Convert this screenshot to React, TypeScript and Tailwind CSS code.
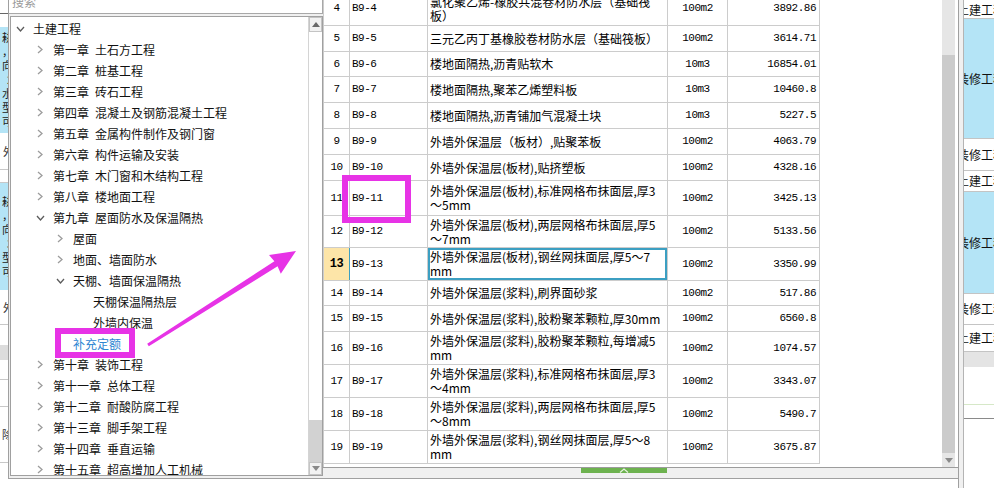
import React from 'react'

type TreeNode = { label: string; pad: string; arrow?: 'right' | 'down'; blue?: boolean }

const L1 = 'pl-[24px]'
const L2 = 'pl-[44px]'

const TREE: TreeNode[] = [
  { label: '土建工程', pad: 'pl-[4px]', arrow: 'down' },
  { label: '第一章 土石方工程', pad: L1, arrow: 'right' },
  { label: '第二章 桩基工程', pad: L1, arrow: 'right' },
  { label: '第三章 砖石工程', pad: L1, arrow: 'right' },
  { label: '第四章 混凝土及钢筋混凝土工程', pad: L1, arrow: 'right' },
  { label: '第五章 金属构件制作及钢门窗', pad: L1, arrow: 'right' },
  { label: '第六章 构件运输及安装', pad: L1, arrow: 'right' },
  { label: '第七章 木门窗和木结构工程', pad: L1, arrow: 'right' },
  { label: '第八章 楼地面工程', pad: L1, arrow: 'right' },
  { label: '第九章 屋面防水及保温隔热', pad: L1, arrow: 'down' },
  { label: '屋面', pad: L2, arrow: 'right' },
  { label: '地面、墙面防水', pad: L2, arrow: 'right' },
  { label: '天棚、墙面保温隔热', pad: L2, arrow: 'down' },
  { label: '天棚保温隔热层', pad: 'pl-[82px]' },
  { label: '外墙内保温', pad: 'pl-[82px]' },
  { label: '补充定额', pad: 'pl-[62px]', blue: true },
  { label: '第十章 装饰工程', pad: L1, arrow: 'right' },
  { label: '第十一章 总体工程', pad: L1, arrow: 'right' },
  { label: '第十二章 耐酸防腐工程', pad: L1, arrow: 'right' },
  { label: '第十三章 脚手架工程', pad: L1, arrow: 'right' },
  { label: '第十四章 垂直运输', pad: L1, arrow: 'right' },
  { label: '第十五章 超高增加人工机械', pad: L1, arrow: 'right' },
]

type Row = { n: number; code: string; name: string[]; unit: string; price: string; h: string }

const ROWS: Row[] = [
  { n: 4, code: 'B9-4', name: ['氯化聚乙烯-橡胶共混卷材防水层（基础筏', '板）'], unit: '100m2', price: '3892.86', h: 'h-[34px]' },
  { n: 5, code: 'B9-5', name: ['三元乙丙丁基橡胶卷材防水层（基础筏板）'], unit: '100m2', price: '3614.71', h: 'h-[26px]' },
  { n: 6, code: 'B9-6', name: ['楼地面隔热,沥青贴软木'], unit: '10m3', price: '16854.01', h: 'h-[25px]' },
  { n: 7, code: 'B9-7', name: ['楼地面隔热,聚苯乙烯塑料板'], unit: '10m3', price: '10460.8', h: 'h-[26px]' },
  { n: 8, code: 'B9-8', name: ['楼地面隔热,沥青铺加气混凝土块'], unit: '10m3', price: '5227.5', h: 'h-[26px]' },
  { n: 9, code: 'B9-9', name: ['外墙外保温层（板材）,贴聚苯板'], unit: '100m2', price: '4063.79', h: 'h-[26px]' },
  { n: 10, code: 'B9-10', name: ['外墙外保温层(板材),贴挤塑板'], unit: '100m2', price: '4328.16', h: 'h-[26px]' },
  { n: 11, code: 'B9-11', name: ['外墙外保温层(板材),标准网格布抹面层,厚3', '～5mm'], unit: '100m2', price: '3425.13', h: 'h-[35px]' },
  { n: 12, code: 'B9-12', name: ['外墙外保温层(板材),两层网格布抹面层,厚5', '～7mm'], unit: '100m2', price: '5133.56', h: 'h-[32px]' },
  { n: 13, code: 'B9-13', name: ['外墙外保温层(板材),钢丝网抹面层,厚5～7', 'mm'], unit: '100m2', price: '3350.99', h: 'h-[33px]' },
  { n: 14, code: 'B9-14', name: ['外墙外保温层(浆料),刷界面砂浆'], unit: '100m2', price: '517.86', h: 'h-[25px]' },
  { n: 15, code: 'B9-15', name: ['外墙外保温层(浆料),胶粉聚苯颗粒,厚30mm'], unit: '100m2', price: '6560.8', h: 'h-[26px]' },
  { n: 16, code: 'B9-16', name: ['外墙外保温层(浆料),胶粉聚苯颗粒,每增减5', 'mm'], unit: '100m2', price: '1074.57', h: 'h-[33px]' },
  { n: 17, code: 'B9-17', name: ['外墙外保温层(浆料),标准网格布抹面层,厚3', '～4mm'], unit: '100m2', price: '3343.07', h: 'h-[33px]' },
  { n: 18, code: 'B9-18', name: ['外墙外保温层(浆料),两层网格布抹面层,厚5', '～8mm'], unit: '100m2', price: '5490.7', h: 'h-[33px]' },
  { n: 19, code: 'B9-19', name: ['外墙外保温层(浆料),钢丝网抹面层,厚5～8', 'mm'], unit: '100m2', price: '3675.87', h: 'h-[33px]' },
]

const MONO = "font-['Liberation_Mono','Noto_Sans_CJK_SC',monospace] text-[11px] tracking-[-0.5px]"

function Chevron({ dir }: { dir: 'right' | 'down' }) {
  if (dir === 'right')
    return (
      <svg width="6" height="9" viewBox="0 0 6 9">
        <path d="M1 1l4 3.5L1 8" fill="none" stroke="#9c9c9c" strokeWidth="1.3" />
      </svg>
    )
  return (
    <svg width="9" height="6" viewBox="0 0 9 6">
      <path d="M1 1l3.5 4L8 1" fill="none" stroke="#5c5c5c" strokeWidth="1.3" />
    </svg>
  )
}

function TreeLabel({ text }: { text: string }) {
  const parts = text.split(' ')
  if (parts.length === 1) return <span>{text}</span>
  return (
    <span className="flex gap-[6px]">
      <span>{parts[0]}</span>
      <span>{parts[1]}</span>
    </span>
  )
}

// a sliver of the sheet behind the dialog, left side
function LeftStrip() {
  return (
    <div className="flex h-[488px] w-[8px] shrink-0 flex-col overflow-hidden bg-white text-[11px] leading-[13px]">
      <div className="h-[14px] border-b border-[#666]" />
      <div className="h-[13px]" />
      <div className="flex h-[106px] flex-col items-end justify-center overflow-hidden bg-[#b4e4f6] text-[#222]">
        {['耕', '，', '向', '2', '水', '型', '可'].map((c, i) => (
          <span key={i} className="-mr-[5px] h-[14px]">{c}</span>
        ))}
      </div>
      <div className="flex h-[37px] items-center justify-end border-b border-[#c8c8c8]">
        <span className="-mr-[6px] text-[#333]">外</span>
      </div>
      <div className="h-[13px] border-b border-[#c8c8c8]" />
      <div className="flex h-[107px] flex-col items-end justify-center overflow-hidden bg-[#b4e4f6] text-[#222]">
        {['耕', '，', '向', '3', '型', '可'].map((c, i) => (
          <span key={i} className="-mr-[5px] h-[14px]">{c}</span>
        ))}
      </div>
      <div className="flex h-[35px] items-center justify-end border-b border-[#c8c8c8]">
        <span className="-mr-[6px] text-[#333]">外</span>
      </div>
      <div className="h-[20px]" />
      <div className="h-[15px] bg-[#dcdcdc]" />
      <div className="h-[20px] border-b border-[#c8c8c8]" />
      <div className="h-[27px] border-b border-[#c8c8c8]" />
      <div className="flex h-[56px] items-center justify-end border-b border-[#c8c8c8]">
        <span className="-mr-[5px] text-[#333]">除</span>
      </div>
    </div>
  )
}

function RightCell({ text, h, blue, last }: { text?: string; h: string; blue?: boolean; last?: string }) {
  return (
    <div
      className={`flex ${h} items-center overflow-hidden border-b ${last ?? 'border-[#c4c4c4]'} ${
        blue ? 'bg-[#b4e4f6]' : 'bg-white'
      }`}
    >
      {text && <span className="-ml-[7px] whitespace-nowrap text-[#111]">{text}</span>}
    </div>
  )
}

// and the right side of it
function RightStrip() {
  return (
    <div className="flex h-[488px] w-[36px] shrink-0 border-l border-[#a0a0a0] bg-[#f0f0f0] pl-[4px]">
      <div className="flex w-[31px] flex-col overflow-hidden border-l border-[#b4b4b4] bg-white">
        <div className="flex h-[19px] items-end overflow-hidden border-b border-[#c4c4c4]">
          <span className="-ml-[7px] whitespace-nowrap leading-[17px] text-[#111]">土建工程</span>
        </div>
        <RightCell text="装修工程" h="h-[120px]" blue />
        <RightCell text="装修工程" h="h-[32px]" />
        <RightCell text="土建工程" h="h-[21px]" />
        <RightCell text="装修工程" h="h-[102px]" blue />
        <RightCell text="装修工程" h="h-[31px]" />
        <RightCell text="土建工程" h="h-[27px]" />
        <div className="h-[15px] bg-[#e4e4e4]" />
        <RightCell h="h-[38px]" last="border-[#d6e8c8]" />
        <RightCell h="h-[14px]" last="border-[#8a8a8a]" />
      </div>
    </div>
  )
}

function TreeScrollbar() {
  return (
    <div className="flex w-[14px] shrink-0 flex-col border-l border-[#d4d4d4] bg-white">
      <div className="flex h-[15px] items-center justify-center border border-[#c4c4c4] bg-[#f2f2f2]">
        <svg width="8" height="5" viewBox="0 0 8 5">
          <path d="M0 5L4 0l4 5z" fill="#6a6a6a" />
        </svg>
      </div>
      <div className="flex-1" />
      <div className="h-[42px] bg-[#d2d2d2]" />
      <div className="flex h-[13px] items-center justify-center border border-[#c4c4c4] bg-[#f2f2f2]">
        <svg width="8" height="5" viewBox="0 0 8 5">
          <path d="M0 0l4 5 4-5z" fill="#8a8a8a" />
        </svg>
      </div>
    </div>
  )
}

function TablePanel() {
  return (
    <div className="flex w-[635px] shrink-0 flex-col">
      <div className="flex h-[467px] bg-white">
        <div className="w-[497px] shrink-0 overflow-hidden border-l border-[#cccccc]">
          <div className="-mt-[8px]">
            {ROWS.map((r) => {
              const sel = r.n === 13
              return (
                <div key={r.n} className={`flex ${r.h} border-b border-[#cccccc]`}>
                  <div
                    className={`flex w-[26px] items-center justify-center border-r ${MONO} ${
                      sel ? 'border-[#3c9fc2] bg-[#fde5a8] font-bold text-[12px]' : 'border-[#cccccc]'
                    }`}
                  >
                    {r.n}
                  </div>
                  <div className={`flex w-[78px] items-center border-r border-[#cccccc] pl-[2px] ${MONO}`}>{r.code}</div>
                  <div
                    className={`flex w-[240px] flex-col justify-center overflow-hidden whitespace-nowrap border-r border-[#cccccc] pl-[2px] leading-[14px] ${
                      sel ? 'shadow-[inset_0_0_0_2px_#3c9fc2]' : ''
                    }`}
                  >
                    {r.name.map((l, i) => (
                      <span key={i}>{l}</span>
                    ))}
                  </div>
                  <div className={`flex w-[60px] items-center justify-center border-r border-[#cccccc] ${MONO}`}>{r.unit}</div>
                  <div className={`flex w-[92px] items-center justify-end border-r border-[#cccccc] pr-[3px] ${MONO}`}>
                    {r.price}
                  </div>
                </div>
              )
            })}
          </div>
        </div>
        <div className="flex-1 bg-white" />
        <div className="flex w-[13px] shrink-0 flex-col">
          <div className="h-[55px] bg-[#e6e6e6]" />
          <div className="flex-1 bg-[#cbcbcb]" />
          <div className="flex h-[14px] items-center justify-center bg-[#e6e6e6]">
            <svg width="8" height="5" viewBox="0 0 8 5">
              <path d="M0 0l4 5 4-5z" fill="#8a8a8a" />
            </svg>
          </div>
        </div>
        <div className="w-[3px] bg-white" />
      </div>
      <div className="h-[11px] border-t border-[#9c9c9c] bg-[#f0f0f0]">
        <div className="ml-[258px] flex h-[5px] w-[86px] items-center justify-center bg-[#6db24f]">
          <svg width="10" height="5" viewBox="0 0 10 5">
            <path d="M1 4.5L5 1l4 3.5" fill="none" stroke="#e8f4e0" strokeWidth="1.2" />
          </svg>
        </div>
      </div>
    </div>
  )
}

export default function App() {
  return (
    <div className="relative flex h-[488px] w-[994px] overflow-hidden bg-white font-['Noto_Sans_CJK_SC',sans-serif] text-[12px] text-black">
      <LeftStrip />
      <div className="flex h-[488px] w-[950px] shrink-0 flex-col">
        <div className="flex h-[479px] border-b border-l border-[#a0a0a0] bg-[#f0f0f0]">
          {/* tree side */}
          <div className="flex w-[314px] shrink-0 flex-col">
            <div className="-mt-[10px] h-[24px] border-b border-r border-[#a8a8a8] bg-white pl-[3px] leading-[23px] text-[#9a9a9a]">
              搜索
            </div>
            <div className="ml-[1px] mt-[2px] flex h-[460px] w-[313px] overflow-hidden border border-[#a0a0a0] bg-white">
              <div className="flex-1 overflow-hidden pt-[1px]">
                {TREE.map((t, i) => (
                  <div key={i} className={`flex h-[21px] items-center whitespace-nowrap ${t.pad}`}>
                    {t.arrow && (
                      <span className="mr-[8px] flex w-[10px] justify-center">
                        <Chevron dir={t.arrow} />
                      </span>
                    )}
                    <span className={t.blue ? 'text-[#2f86d2]' : 'text-[#111]'}>
                      <TreeLabel text={t.label} />
                    </span>
                  </div>
                ))}
              </div>
              <TreeScrollbar />
            </div>
          </div>
          <TablePanel />
        </div>
        <div className="flex-1 bg-white" />
      </div>
      <RightStrip />

      {/* annotation marks */}
      <svg className="pointer-events-none absolute left-0 top-0" width="994" height="488" viewBox="0 0 994 488">
        <rect x="58" y="331" width="74" height="24" fill="none" stroke="#e733e6" strokeWidth="6" />
        <rect x="345" y="178" width="63" height="42" fill="none" stroke="#e733e6" strokeWidth="6" />
        <polygon
          points="147.2,343.7 274.4,261.2 269,255.1 296,251 280.8,273.7 277.6,266.2 148.8,346.3"
          fill="#e733e6"
        />
      </svg>
    </div>
  )
}
